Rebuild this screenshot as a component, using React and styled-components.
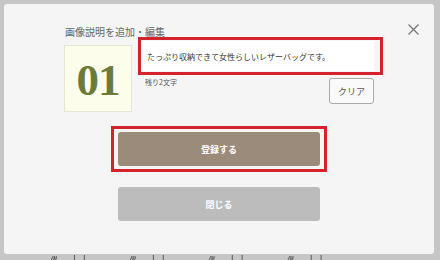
import React from "react";
import styled, { createGlobalStyle } from "styled-components";

const Global = createGlobalStyle`
  html, body { margin: 0; padding: 0; background: #c6c6c6; }
  body { font-family: "Noto Sans CJK JP", "Noto Sans", sans-serif; }
  * { box-sizing: border-box; }
`;

const Page = styled.div`
  width: 440px;
  height: 260px;
  padding: 4px 6px 0 4px;
  display: flex;
  flex-direction: column;
  background: #c6c6c6;
  overflow: hidden;
`;

const Modal = styled.div`
  position: relative;
  height: 250px;
  flex: none;
  background: #f5f5f5;
  border-radius: 3px;
  padding: 21px 60px 0 60px;
  display: flex;
  flex-direction: column;
`;

const CloseX = styled.button`
  position: absolute;
  top: 16px;
  right: 11px;
  width: 19px;
  height: 19px;
  padding: 4px;
  border: none;
  background: transparent;
  display: flex;
  cursor: pointer;
`;

const Title = styled.div`
  margin-left: 1px;
  font-size: 10px;
  line-height: 14px;
  color: #666;
  letter-spacing: 0;
`;

const Row = styled.div`
  display: flex;
  gap: 9px;
  margin-top: 2px;
  align-items: flex-start;
`;

const Thumb = styled.div`
  margin-top: 4px;
  width: 68px;
  height: 67px;
  flex: none;
  background: #fdfdec;
  border: 1px solid #e6e6d6;
  display: flex;
  align-items: center;
  justify-content: center;
  font-family: "Liberation Serif", "DejaVu Serif", serif;
  font-weight: 700;
  font-size: 45px;
  color: #6c7a3a;
  letter-spacing: -1px;
  padding-top: 3px;
`;

const Col = styled.div`
  flex: 1;
  display: flex;
  flex-direction: column;
`;

const InputWrap = styled.div`
  position: relative;
  height: 30px;
  background: #fff;
  display: flex;
  align-items: center;
  padding-left: 6px;
  font-size: 8px;
  color: #333;
  white-space: nowrap;
  &::after {
    content: "";
    position: absolute;
    top: -4px;
    bottom: -4px;
    left: -3px;
    right: -9px;
    border: 3px solid #d4232c;
    pointer-events: none;
  }
`;

const SubRow = styled.div`
  display: flex;
  justify-content: space-between;
  align-items: flex-start;
  margin-top: 7px;
`;

const Remain = styled.div`
  margin-left: 4px;
  font-size: 7px;
  line-height: 9px;
  color: #555;
`;

const ClearBtn = styled.button`
  width: 45px;
  height: 26px;
  background: #fafafa;
  border: 1px solid #a9a9a9;
  border-radius: 3px;
  font-family: inherit;
  font-size: 9px;
  color: #555;
  padding: 0;
  display: flex;
  align-items: center;
  justify-content: center;
`;

const ActionBtn = styled.button`
  position: relative;
  align-self: center;
  width: 202px;
  height: 34px;
  margin-top: ${(p) => p.$mt}px;
  border: none;
  border-radius: 3px;
  background: ${(p) => p.$bg};
  color: #fff;
  font-family: inherit;
  font-weight: 700;
  font-size: 9px;
  display: flex;
  align-items: center;
  justify-content: center;
  padding: 0;
  &::after {
    content: "";
    display: ${(p) => (p.$highlight ? "block" : "none")};
    position: absolute;
    top: -6px;
    bottom: -6px;
    left: -7px;
    right: -7px;
    border: 3px solid #d4232c;
    pointer-events: none;
  }
`;

const Strip = styled.div`
  height: 6px;
  flex: none;
  margin-left: -4px;
  display: flex;
`;

function Marks() {
  const groups = [0, 1, 2, 3];
  return (
    <svg width="440" height="6" viewBox="0 0 440 6">
      {groups.map((i) => {
        const b = 52 + i * 80;
        return (
          <g key={i} stroke="#555" strokeWidth="1" fill="none">
            <path d={`M${b} 6 L${b + 2} 2 M${b + 3} 6 L${b + 3} 2 M${b + 5} 2 L${b + 5} 5 L${b + 2} 5`} />
            <path d={`M${b + 23.5} 1 L${b + 23.5} 6`} />
            <path d={`M${b + 33.5} 1 L${b + 33.5} 6`} />
          </g>
        );
      })}
    </svg>
  );
}

export default function App() {
  return (
    <>
      <Global />
      <Page>
        <Modal>
          <CloseX aria-label="close">
            <svg width="11" height="11" viewBox="0 0 11 11">
              <path d="M0.5 0.5 L10.5 10.5 M10.5 0.5 L0.5 10.5" stroke="#777" strokeWidth="1.3" />
            </svg>
          </CloseX>
          <Title>画像説明を追加・編集</Title>
          <Row>
            <Thumb>01</Thumb>
            <Col>
              <InputWrap>たっぷり収納できて女性らしいレザーバッグです。</InputWrap>
              <SubRow>
                <Remain>残り2文字</Remain>
                <ClearBtn>クリア</ClearBtn>
              </SubRow>
            </Col>
          </Row>
          <ActionBtn $bg="#9b8b7b" $mt={20} $highlight>登録する</ActionBtn>
          <ActionBtn $bg="#bcbcbc" $mt={21}>閉じる</ActionBtn>
        </Modal>
        <Strip>
          <Marks />
        </Strip>
      </Page>
    </>
  );
}
